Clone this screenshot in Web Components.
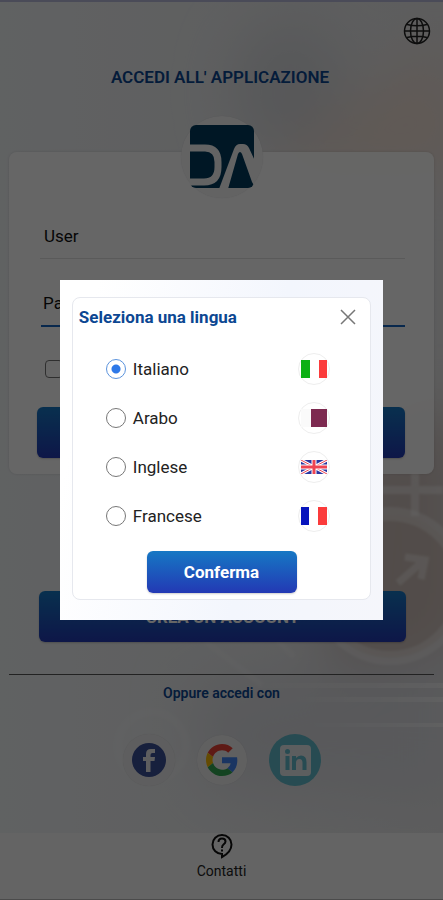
<!DOCTYPE html>
<html lang="it">
<head>
<meta charset="utf-8">
<meta name="viewport" content="width=device-width, initial-scale=1">
<title>Accedi</title>
<style>
html, body { margin: 0; height: 100%; }
body { font-family: Roboto, "Liberation Sans", sans-serif; font-size: 16px; color: #111; --brand: #0c4792; --grad: linear-gradient(#1678c4, #2339b4); }
</style>
</head>
<body>
<app-page></app-page>
<script>
function define(name, html, setup) {
  const t = document.createElement('template');
  t.innerHTML = html;
  customElements.define(name, class extends HTMLElement {
    constructor() {
      super();
      this.attachShadow({ mode: 'open' }).append(t.content.cloneNode(true));
    }
    connectedCallback() { if (setup) setup(this, this.shadowRoot); }
  });
}

/* Soft abstract wallpaper */
define('page-scene', `
<style>
:host { display: block; position: absolute; inset: 0; z-index: -1; }
svg { display: block; width: 100%; height: 100%; }
</style>
<svg viewBox="0 0 443 900" preserveAspectRatio="xMidYMid slice" aria-hidden="true">
  <defs>
    <filter id="b" x="-50%" y="-50%" width="200%" height="200%"><feGaussianBlur stdDeviation="28"/></filter>
    <filter id="s" x="-20%" y="-20%" width="140%" height="140%"><feGaussianBlur stdDeviation="1"/></filter>
    <linearGradient id="g" x1="0" y1="0" x2="1" y2="0"><stop offset="0" stop-color="#f1f4f6"/><stop offset="1" stop-color="#e8e8e9"/></linearGradient>
    <linearGradient id="l" x1="0" y1="0" x2="1" y2="0"><stop offset="0" stop-color="#fff" stop-opacity="0"/><stop offset="1" stop-color="#fff" stop-opacity=".5"/></linearGradient>
  </defs>
  <rect width="443" height="900" fill="url(#g)"/>
  <g filter="url(#b)">
    <ellipse cx="290" cy="90" rx="55" ry="70" fill="#d9dbdf"/>
    <path d="M270 160 L443 40 L480 170 L300 180Z" fill="#f0dfd5"/>
    <path d="M340 460 L460 400 L460 660 L330 660Z" fill="#cdc0bb"/>
    <path d="M190 690 L460 640 L460 800 L210 790Z" fill="#dedfe4"/>
  </g>
  <g filter="url(#s)" fill="none" stroke="#fff" stroke-opacity=".4">
    <path d="M415 470V515M370 489H443" stroke-width="8"/>
    <circle cx="390" cy="585" r="72" stroke-width="14" stroke-opacity=".35" fill="#cdbdb6" fill-opacity=".65"/>
    <path d="M398 582L423 560M405 556L425 559L421 578" stroke-width="7" stroke-opacity=".4"/>
    <path d="M205 640L262 684M270 632L294 656" stroke-width="6" stroke-opacity=".2"/>
    <circle cx="152" cy="745" r="34" stroke-width="8" stroke-opacity=".16"/>
  </g>
  <g fill="url(#l)">
    <rect x="250" y="682" width="193" height="5"/><rect x="280" y="696" width="163" height="5"/><rect x="310" y="722" width="133" height="4"/>
  </g>
</svg>`);

define('brand-logo', `
<style>
:host { display: grid; place-items: center; width: 82px; height: 82px; border-radius: 50%; background: #f7f7f8; box-shadow: 0 0 1px #0002; }
svg { display: block; width: 64px; height: 64px; }
</style>
<svg viewBox="0 0 64 64" role="img" aria-label="DA">
  <rect x="0" y="0" width="64" height="63" rx="6" fill="#003a5c"/>
  <path d="M0 23H15Q28 23 28 37V42Q28 57 14 57H0" fill="none" stroke="#f7f7f8" stroke-width="7"/>
  <path d="M29 64L44 24Q46 19 50 19H53Q57 19 59 23L66 38V64L62 57L52 29Q50 25 48 29L38 64Z" fill="#f7f7f8"/>
</svg>`);

define('grad-button', `
<style>
:host { display: block; }
button { display: block; width: 100%; height: var(--h, 51px); border: 0; border-radius: 6px; background: var(--grad); color: #fff; font: 700 17px Roboto, sans-serif; box-shadow: 0 1px 2px #0003; }
</style>
<button type="button"><slot></slot></button>`, (el, r) => {
  if (el.hasAttribute('label')) r.querySelector('button').setAttribute('aria-label', el.getAttribute('label'));
});

define('login-card', `
<style>
:host { display: flex; flex-direction: column; align-items: center; margin: 0 9px; border-radius: 8px; background: #fffffff0; box-shadow: 0 0 3px #0002; }
brand-logo { margin-top: -36px; }
form { display: block; box-sizing: border-box; width: 100%; padding: 15px 29px 16px 28px; }
input:not([type=checkbox]) { display: block; box-sizing: border-box; width: 100%; height: 46px; padding: 0 4px; border: 0; border-bottom: 1px solid #e2e2e2; background: none; font: 17px Roboto, sans-serif; color: #111; outline: 0; }
input::placeholder { color: #111; opacity: 1; }
.f { padding: 0 0 0 3px; }
.p { margin-top: 22px; padding: 0 0 0 4px; }
.p input:not([type=checkbox]) { border-bottom: 2px solid #1565c0; padding: 0 0 0 2px; }
.c { display: block; height: 18px; margin: 33px 0 29px 8px; }
.c input { appearance: none; display: block; box-sizing: border-box; width: 18px; height: 18px; margin: 0; border: 1px solid #777; border-radius: 4px; }
</style>
<brand-logo></brand-logo>
<form>
  <div class="f"><input type="text" placeholder="User" aria-label="User"></div>
  <div class="p"><input type="password" placeholder="Password" aria-label="Password"></div>
  <div class="c"><input type="checkbox" aria-label="Ricordami"></div>
  <grad-button label="Accedi"></grad-button>
</form>`);

define('social-links', `
<style>
:host { display: flex; justify-content: center; align-items: center; gap: 22px; }
a { display: grid; place-items: center; width: 52px; height: 52px; border-radius: 50%; }
svg { display: block; }
a.in { background: #62bccc; }
a.g { background: #f0f0f1; width: 50px; height: 50px; box-shadow: 0 0 1px #0002; }
a.fb { background: #ececee; box-shadow: 0 0 1px #0002; }
</style>
<a class="fb" href="#facebook" aria-label="Facebook"><svg width="34" height="34" viewBox="0 0 34 34"><circle cx="17" cy="17" r="17" fill="#3b5098"/><path d="M14 29V18H11V14H14V11Q14 6 19 6H23V10H20.500Q18.500 10 18.500 12V14H23L22.500 18H18.500V29Z" fill="#ececee"/></svg></a>
<a class="g" href="#google" aria-label="Google"><svg width="32" height="32" viewBox="0 0 48 48"><path fill="#EA4335" d="M24 9.500c3.540 0 6.710 1.220 9.210 3.600l6.850-6.850C35.900 2.380 30.470 0 24 0 14.620 0 6.510 5.380 2.560 13.220l7.980 6.190C12.430 13.720 17.740 9.500 24 9.500z"/><path fill="#4285F4" d="M46.980 24.550c0-1.570-.15-3.090-.38-4.550H24v9.020h12.940c-.58 2.960-2.260 5.480-4.780 7.180l7.730 6c4.510-4.180 7.090-10.360 7.090-17.650z"/><path fill="#FBBC05" d="M10.530 28.590c-.48-1.450-.76-2.990-.76-4.590s.27-3.140.76-4.590l-7.980-6.190C.92 16.460 0 20.120 0 24c0 3.880.92 7.540 2.560 10.780l7.970-6.190z"/><path fill="#34A853" d="M24 48c6.480 0 11.930-2.130 15.890-5.810l-7.730-6c-2.150 1.450-4.920 2.300-8.160 2.300-6.260 0-11.570-4.220-13.470-9.910l-7.980 6.190C6.510 42.620 14.620 48 24 48z"/></svg></a>
<a class="in" href="#linkedin" aria-label="LinkedIn"><svg width="32" height="32" viewBox="0 0 32 32"><rect x="1" y="1" width="31" height="31" rx="4" fill="#e6eaee"/><g fill="#62bccc"><circle cx="8.500" cy="7.500" r="2.500"/><path d="M6.500 12H10.500V26H6.500ZM13 12H17V14Q19 11.500 22 11.500Q27.500 11.500 27.500 18V26H23.500V19Q23.500 15 20.500 15Q17 15 17 19V26H13Z"/></g></svg></a>`);

define('bottom-nav', `
<style>
:host { display: block; background: #fbfbfb; border-bottom: 1px solid #bbb; }
a { display: flex; flex-direction: column; align-items: center; gap: 3px; padding-bottom: 19px; color: #222; font-size: 14px; line-height: 18px; text-decoration: none; }
svg { display: block; }
</style>
<a href="#contatti"><svg width="24" height="26" viewBox="0 0 24 26" fill="none" stroke="#111" stroke-width="2"><path d="M12 2A9.500 9.500 0 1 0 12 21V24Q21.500 19 21.500 11.500A9.500 9.500 0 0 0 12 2Z"/><path d="M8.500 9Q8.500 5.500 12 5.500Q15.500 5.500 15.500 8.500Q15.500 10 13.500 11.500Q12 12.600 12 15M12 16.500V18.500"/></svg><span>Contatti</span></a>`);

define('flag-icon', `
<style>
:host { display: grid; place-items: center; width: 32px; height: 32px; border-radius: 50%; border: 1px solid #eee; box-sizing: border-box; }
svg { grid-area: 1 / 1; display: none; width: 26px; height: 18px; }
:host([code=it]) .it, :host([code=qa]) .qa, :host([code=gb]) .gb, :host([code=fr]) .fr { display: block; }
.gb { height: 14px; }
</style>
<svg class="it" viewBox="0 0 26 18"><path fill="#0db014" d="M0 0H9V18H0z"/><path fill="#fff" d="M9 0h9v18H9z"/><path fill="#fb3b3b" d="M18 0h8v18h-8z"/></svg>
<svg class="qa" viewBox="0 0 26 18"><path fill="#fafafa" d="M0 0H10V18H0z"/><path fill="#7d2a50" d="M10 0h16v18H10z"/></svg>
<svg class="gb" viewBox="0 0 26 14"><path fill="#2b36a0" d="M0 0H26V14H0z"/><path stroke="#fff" stroke-width="3" d="M0 0L26 14M26 0L0 14"/><path stroke="#ee4452" stroke-width="1" d="M0 0L26 14M26 0L0 14"/><path stroke="#fff" stroke-width="5" d="M13 0V14M0 7H26"/><path stroke="#ee4452" stroke-width="3" d="M13 0V14M0 7H26"/></svg>
<svg class="fr" viewBox="0 0 26 18"><path fill="#0714bd" d="M0 0H8V18H0z"/><path fill="#fff" d="M8 0h9v18H8z"/><path fill="#fb3b3b" d="M17 0h9v18h-9z"/></svg>`);

define('language-dialog', `
<style>
:host { display: grid; place-items: center; position: fixed; inset: 0; background: #0009; }
section { box-sizing: border-box; width: 73%; max-width: 420px; padding: 17px 12px 20px; background: linear-gradient(100deg, #fff 10%, #f3f6fd 60%, #f5f6fb); }
.card { border: 1px solid #e6e8ee; border-radius: 8px; background: #fff; padding: 7px 6px 6px; }
header { display: flex; justify-content: space-between; align-items: center; padding-right: 4px; }
h2 { margin: 0; font-size: 17px; line-height: 24px; font-weight: 700; color: var(--brand); }
.x { display: grid; place-items: center; width: 24px; height: 24px; border: 0; padding: 0; background: none; }
fieldset { display: grid; gap: 17px; margin: 24px 34px 19px 27px; padding: 0; border: 0; }
label { display: flex; align-items: center; gap: 7px; height: 32px; font-size: 17px; color: #222; }
flag-icon { margin-left: auto; }
input { appearance: none; box-sizing: border-box; width: 20px; height: 20px; margin: 0; border: 1px solid #777; border-radius: 50%; background: #fff; }
input:checked { border-color: #5b93dd; background: radial-gradient(circle, #2d78e8 4px, #fff 5px); }
grad-button { width: 150px; margin: 0 auto; --h: 42px; }
</style>
<section role="dialog" aria-modal="true" aria-labelledby="t"><div class="card">
  <header><h2 id="t">Seleziona una lingua</h2><button class="x" type="button" aria-label="Chiudi"><svg width="16" height="16" viewBox="0 0 16 16" stroke="#777" stroke-width="1.500"><path d="M1 1L15 15M15 1L1 15"/></svg></button></header>
  <fieldset aria-labelledby="t">
    <label><input type="radio" name="l" checked>Italiano<flag-icon code="it"></flag-icon></label>
    <label><input type="radio" name="l">Arabo<flag-icon code="qa"></flag-icon></label>
    <label><input type="radio" name="l">Inglese<flag-icon code="gb"></flag-icon></label>
    <label><input type="radio" name="l">Francese<flag-icon code="fr"></flag-icon></label>
  </fieldset>
  <grad-button>Conferma</grad-button>
</div></section>`);

define('app-page', `
<style>
:host { display: flex; flex-direction: column; position: relative; z-index: 0; min-height: 100vh; box-sizing: border-box; border-top: 2px solid #b8bcdc; }
.top { display: flex; justify-content: flex-end; padding: 15px 12px 0; }
.top button { display: block; padding: 0; border: 0; background: none; }
.top svg { display: block; }
h1 { margin: 22px 0 65px; padding-right: 3px; text-align: center; font-size: 17px; line-height: 20px; font-weight: 600; color: var(--brand); }
.create { margin: 117px 37px 0 39px; }
hr { width: calc(100% - 18px); margin: 32px auto 8px; border: 0; border-top: 1px solid #555; }
h3 { margin: 0 0 31px; text-align: center; font-size: 14px; line-height: 20px; font-weight: 600; color: var(--brand); }
bottom-nav { margin-top: auto; }
</style>
<page-scene></page-scene>
<div class="top"><button type="button" aria-label="Lingua"><svg width="28" height="28" viewBox="0 0 28 28" fill="none" stroke="#222" stroke-width="1.500"><circle cx="14" cy="14" r="12.500"/><ellipse cx="14" cy="14" rx="6.500" ry="12.500"/><path d="M14 1.500V26.500M1.500 14H26.500M4 7.500Q14 10 24 7.500M4 20.500Q14 18 24 20.500"/></svg></button></div>
<h1>ACCEDI ALL' APPLICAZIONE</h1>
<login-card></login-card>
<grad-button class="create">CREA UN ACCOUNT</grad-button>
<hr>
<h3>Oppure accedi con</h3>
<social-links></social-links>
<bottom-nav></bottom-nav>
<language-dialog></language-dialog>`);
</script>
</body>
</html>
